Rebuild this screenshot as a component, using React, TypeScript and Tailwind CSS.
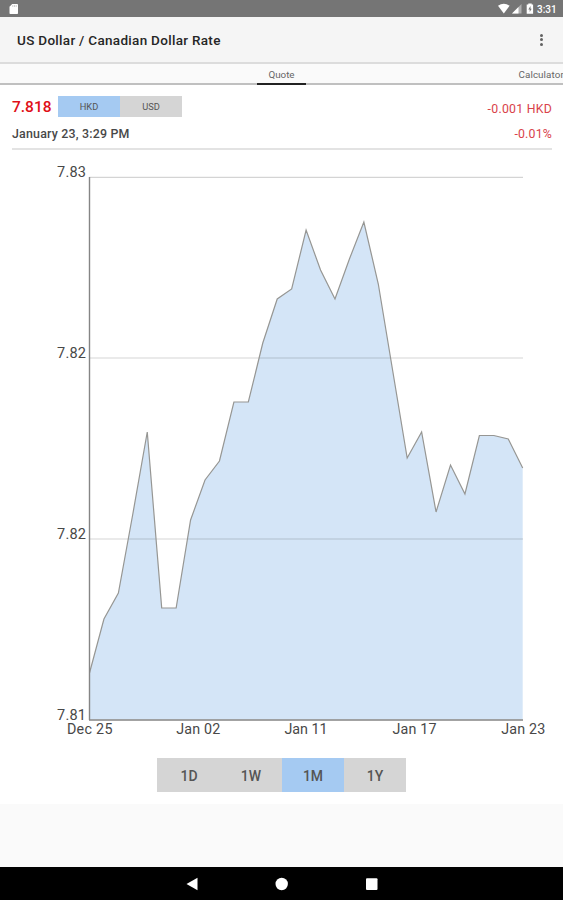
import React from "react";

const values = [
  673, 619, 593, 514, 432, 608, 608, 520, 480, 461, 402, 402, 343, 299, 289, 230,
  270, 299, 259, 222, 284, 371, 458, 432, 512, 465, 494, 435.5, 435.5, 439, 468,
];
const LEFT = 89.5;
const RIGHT = 522.7;
const BOTTOM = 719.5;
const line = values
  .map((y, i) => `${(LEFT + (i * (RIGHT - LEFT)) / (values.length - 1)).toFixed(2)},${y}`)
  .join(" ");

const yLabels = [
  { text: "7.83", y: 176.8 },
  { text: "7.82", y: 357.8 },
  { text: "7.82", y: 538.8 },
  { text: "7.81", y: 719.5 },
];
const xLabels = [
  { text: "Dec 25", x: 89.7, w: 45.5 },
  { text: "Jan 02", x: 198.2, w: 44 },
  { text: "Jan 11", x: 306, w: 43 },
  { text: "Jan 17", x: 414.5, w: 44 },
  { text: "Jan 23", x: 523.2, w: 44 },
];

function StatusBar() {
  return (
    <div className="flex h-[17px] shrink-0 items-center justify-between bg-[#757575] pl-[9px] pr-[6px]">
      <svg width="10" height="12" viewBox="0 0 10 12">
        <path d="M3.2 1H8.2Q9 1 9 1.8V10.2Q9 11 8.2 11H1.3Q.5 11 .5 10.2V3.8Z" fill="#fff" />
        <path d="M3.8 2v2M5.5 2v2M7.2 2v2" stroke="#bbb" strokeWidth=".7" />
      </svg>
      <div className="flex items-center">
        <svg width="38" height="17" viewBox="0 0 38 17">
          <path d="M0 5.7Q5.8 1.6 11.6 5.7L5.8 13.5Z" fill="#fff" />
          <path d="M23.5 4V13.5H14Z" fill="#b0b0b0" />
          <path d="M20.5 7V13.5H14Z" fill="#fff" />
          <path d="M30.3 3.5H33.7V4.5H35.1V13.8H28.7V4.5H30.3Z" fill="#fff" />
          <path d="M32.5 6L30.3 9.5H31.7V12L33.7 8.7H32.5Z" fill="#757575" />
        </svg>
        <span className="ml-[1px] w-[20px] whitespace-nowrap pt-[2px] text-[10px] font-medium leading-none text-white">3:31</span>
      </div>
    </div>
  );
}

function Chart() {
  return (
    <svg className="block shrink-0" width="563" height="600" viewBox="0 150 563 600">
      <polygon points={`${LEFT},${BOTTOM} ${line} ${RIGHT},${BOTTOM}`} fill="#d4e5f7" />
      {[177.3, 358, 539].map((y) => (
        <line key={y} x1={LEFT} x2="523" y1={y} y2={y} stroke="#000" strokeOpacity=".17" strokeWidth="1.2" />
      ))}
      <polyline points={line} fill="none" stroke="#969693" strokeWidth="1.2" />
      <path d="M89.5 177V720" stroke="#858585" strokeWidth="1.4" />
      <path d="M89 720H523" stroke="#858585" strokeWidth="1.3" />
      {yLabels.map((l) => (
        <text key={l.y} x="57" y={l.y} fontSize="14.5" textLength="29" fill="#484848">
          {l.text}
        </text>
      ))}
      {xLabels.map((l) => (
        <text key={l.text} x={l.x} y="734" fontSize="14.3" textLength={l.w} textAnchor="middle" fill="#484848">
          {l.text}
        </text>
      ))}
    </svg>
  );
}

export default function App() {
  return (
    <div className="flex h-[900px] w-[563px] flex-col overflow-hidden bg-[#fafafa] font-['Roboto',sans-serif]">
      <StatusBar />
      <header className="flex h-[47px] shrink-0 items-center justify-between border-b-2 border-[#dcdcdc] bg-[#f5f5f5] pl-[17px] pr-[20px]">
        <h1 className="pt-[3px] text-[13.5px] font-medium leading-none tracking-[0.3px] text-[#262626]">US Dollar / Canadian Dollar Rate</h1>
        <div className="flex flex-col gap-[1.5px]">
          <i className="size-[3px] rounded-full bg-[#626262]" />
          <i className="size-[3px] rounded-full bg-[#626262]" />
          <i className="size-[3px] rounded-full bg-[#626262]" />
        </div>
      </header>
      <nav className="flex h-[21px] shrink-0 justify-between overflow-hidden bg-[#fafafa] pl-[257px] text-[9.8px] leading-none text-[#666] shadow-[inset_0_-2px_0_#c0c0c0]">
        <span className="flex w-[49px] justify-center border-b-2 border-[#222] pt-[5.5px]">Quote</span>
        <span className="w-[44.5px] whitespace-nowrap pt-[5.5px] tracking-[0.1px]">Calculator</span>
      </nav>
      <main className="flex h-[719px] shrink-0 flex-col bg-white">
        <section className="ml-3 mr-[11px] flex h-[65px] shrink-0 flex-col border-b-2 border-[#e3e3e3] text-[#484848]">
          <div className="flex h-[38px] items-start pt-[11px]">
            <span className="w-[46px] pt-[4px] text-[15.5px] font-medium leading-none text-[#df1018]">7.818</span>
            <div className="flex h-[21px] w-[124px] text-[9.3px] leading-[22px] text-[#555]">
              <span className="w-[62px] bg-[#a5caf2] text-center">HKD</span>
              <span className="w-[62px] bg-[#d5d5d5] text-center">USD</span>
            </div>
            <span className="ml-auto pt-[7px] text-[12.3px] leading-none tracking-[0.25px] text-[#d9434b]">-0.001 HKD</span>
          </div>
          <div className="flex justify-between pt-[4.5px] leading-none">
            <span className="text-[12.4px] font-medium tracking-[0.2px]">January 23, 3:29 PM</span>
            <span className="text-[12.3px] tracking-[0.2px] text-[#d9434b]">-0.01%</span>
          </div>
        </section>
        <Chart />
        <div className="mt-[8px] flex h-[34px] w-[249px] shrink-0 self-center text-center text-[14px] font-medium leading-[36px] text-[#555]">
          <span className="w-[62px] bg-[#d5d5d5] pl-[2px]">1D</span>
          <span className="w-[63px] bg-[#d5d5d5] pl-[1px]">1W</span>
          <span className="w-[62px] bg-[#a5caf2]">1M</span>
          <span className="w-[62px] bg-[#d5d5d5]">1Y</span>
        </div>
      </main>
      <footer className="mt-auto flex h-[33px] shrink-0 items-center bg-black pl-[186px]">
        <svg width="192" height="14" viewBox="0 0 192 14">
          <path d="M.5 7L11.5 .8V13.2Z" fill="#fff" />
          <circle cx="95.7" cy="7" r="6.2" fill="#fff" />
          <rect x="180" y="1.2" width="11.5" height="11.8" rx="1" fill="#fff" />
        </svg>
      </footer>
    </div>
  );
}
